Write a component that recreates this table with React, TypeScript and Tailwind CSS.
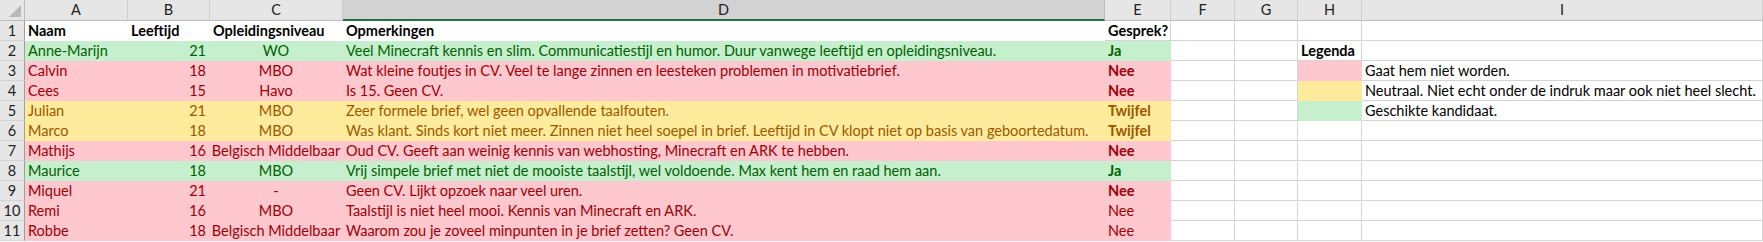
import type { ReactNode } from "react";

type Fill = "none" | "white" | "green" | "red" | "yellow";

const fills: Record<Fill, { bg: string; text: string; line: string }> = {
  none: { bg: "bg-white", text: "text-black", line: "border-[#d4d4d4]" },
  white: { bg: "bg-white", text: "text-black", line: "border-white" },
  green: { bg: "bg-[#c6efce]", text: "text-[#006100]", line: "border-[#c6efce]" },
  red: { bg: "bg-[#ffc7ce]", text: "text-[#9c0006]", line: "border-[#ffc7ce]" },
  yellow: { bg: "bg-[#ffeb9c]", text: "text-[#9c5700]", line: "border-[#ffeb9c]" },
};

type Row = {
  fill: Fill;
  naam: string;
  leeftijd: string;
  niveau: string;
  opmerking: string;
  gesprek: string;
  boldGesprek?: boolean;
  h?: { fill: Fill; text?: string };
  i?: string;
};

const rows: Row[] = [
  {
    fill: "green",
    naam: "Anne-Marijn",
    leeftijd: "21",
    niveau: "WO",
    opmerking:
      "Veel Minecraft kennis en slim. Communicatiestijl en humor. Duur vanwege leeftijd en opleidingsniveau.",
    gesprek: "Ja",
    boldGesprek: true,
    h: { fill: "none", text: "Legenda" },
  },
  {
    fill: "red",
    naam: "Calvin",
    leeftijd: "18",
    niveau: "MBO",
    opmerking:
      "Wat kleine foutjes in CV. Veel te lange zinnen en leesteken problemen in motivatiebrief.",
    gesprek: "Nee",
    boldGesprek: true,
    h: { fill: "red" },
    i: "Gaat hem niet worden.",
  },
  {
    fill: "red",
    naam: "Cees",
    leeftijd: "15",
    niveau: "Havo",
    opmerking: "Is 15. Geen CV.",
    gesprek: "Nee",
    boldGesprek: true,
    h: { fill: "yellow" },
    i: "Neutraal. Niet echt onder de indruk maar ook niet heel slecht.",
  },
  {
    fill: "yellow",
    naam: "Julian",
    leeftijd: "21",
    niveau: "MBO",
    opmerking: "Zeer formele brief, wel geen opvallende taalfouten.",
    gesprek: "Twijfel",
    boldGesprek: true,
    h: { fill: "green" },
    i: "Geschikte kandidaat.",
  },
  {
    fill: "yellow",
    naam: "Marco",
    leeftijd: "18",
    niveau: "MBO",
    opmerking:
      "Was klant. Sinds kort niet meer. Zinnen niet heel soepel in brief. Leeftijd in CV klopt niet op basis van geboortedatum.",
    gesprek: "Twijfel",
    boldGesprek: true,
  },
  {
    fill: "red",
    naam: "Mathijs",
    leeftijd: "16",
    niveau: "Belgisch Middelbaar",
    opmerking:
      "Oud CV. Geeft aan weinig kennis van webhosting, Minecraft en ARK te hebben.",
    gesprek: "Nee",
    boldGesprek: true,
  },
  {
    fill: "green",
    naam: "Maurice",
    leeftijd: "18",
    niveau: "MBO",
    opmerking:
      "Vrij simpele brief met niet de mooiste taalstijl, wel voldoende. Max kent hem en raad hem aan.",
    gesprek: "Ja",
    boldGesprek: true,
  },
  {
    fill: "red",
    naam: "Miquel",
    leeftijd: "21",
    niveau: "-",
    opmerking: "Geen CV. Lijkt opzoek naar veel uren.",
    gesprek: "Nee",
    boldGesprek: true,
  },
  {
    fill: "red",
    naam: "Remi",
    leeftijd: "16",
    niveau: "MBO",
    opmerking: "Taalstijl is niet heel mooi. Kennis van Minecraft en ARK.",
    gesprek: "Nee",
  },
  {
    fill: "red",
    naam: "Robbe",
    leeftijd: "18",
    niveau: "Belgisch Middelbaar",
    opmerking: "Waarom zou je zoveel minpunten in je brief zetten? Geen CV.",
    gesprek: "Nee",
  },
];

const cols = ["A", "B", "C", "D", "E", "F", "G", "H", "I"];

const Cell = ({
  fill,
  align = "left",
  bold,
  children,
}: {
  fill: Fill;
  align?: "left" | "right" | "center";
  bold?: boolean;
  children?: ReactNode;
}) => {
  const f = fills[fill];
  const alignCls =
    align === "right" ? "justify-end" : align === "center" ? "justify-center" : "justify-start";
  return (
    <div
      className={`flex items-end h-[20px] border-r border-b px-[3px] pb-[1px] whitespace-nowrap leading-[17px] ${f.bg} ${f.line} ${f.text} ${alignCls} ${bold ? "font-bold" : ""}`}>
      {children}
    </div>
  );
};

const RowHeader = ({ n }: { n: number }) => (
  <div className="flex items-end justify-center h-[20px] bg-[#e6e6e6] border-r border-b border-r-[#9e9e9e] border-b-[#d4d4d4] pb-[1px] leading-[17px] text-[#222]">
    {n}
  </div>
);

export default function App() {
  return (
    <div
      className="w-[1763px] h-[242px] overflow-hidden bg-white text-[14.5px]"
      style={{ fontFamily: "Lato, 'Liberation Sans', sans-serif" }}>
      <div className="grid grid-cols-[25px_103px_82px_133px_762px_66px_64px_63px_64px_401px]">
        {/* select-all corner */}
        <div className="relative h-[21px] bg-[#e6e6e6] border-r border-b border-[#bdbdbd]">
          <svg className="absolute right-[3px] bottom-[3px]" width="12" height="12">
            <polygon points="12,0 12,12 0,12" fill="#b8b8b8" />
          </svg>
        </div>
        {cols.map((c) => (
          <div
            key={c}
            className={`flex items-center justify-center h-[21px] border-r text-[#222] ${
              c === "D"
                ? "bg-[#d2d2d2] border-r-[#bdbdbd] border-b-2 border-b-[#217346]"
                : "bg-[#e6e6e6] border-r-[#cfcfcf] border-b border-b-[#bdbdbd]"
            }`}>
            {c}
          </div>
        ))}

        {/* row 1 */}
        <RowHeader n={1} />
        <Cell fill="white" bold>Naam</Cell>
        <Cell fill="white" bold>Leeftijd</Cell>
        <Cell fill="white" bold>Opleidingsniveau</Cell>
        <Cell fill="white" bold>Opmerkingen</Cell>
        <Cell fill="none" bold>Gesprek?</Cell>
        <Cell fill="none" />
        <Cell fill="none" />
        <Cell fill="none" />
        <Cell fill="none" />

        {rows.map((r, idx) => (
          <div key={r.naam} className="contents">
            <RowHeader n={idx + 2} />
            <Cell fill={r.fill}>{r.naam}</Cell>
            <Cell fill={r.fill} align="right">{r.leeftijd}</Cell>
            <Cell fill={r.fill} align="center">{r.niveau}</Cell>
            <Cell fill={r.fill}>{r.opmerking}</Cell>
            <Cell fill={r.fill} bold={r.boldGesprek}>{r.gesprek}</Cell>
            <Cell fill="none" />
            <Cell fill="none" />
            <Cell fill={r.h ? r.h.fill : "none"} bold={!!r.h?.text}>{r.h?.text}</Cell>
            <Cell fill="none">{r.i}</Cell>
          </div>
        ))}
      </div>
    </div>
  );
}
